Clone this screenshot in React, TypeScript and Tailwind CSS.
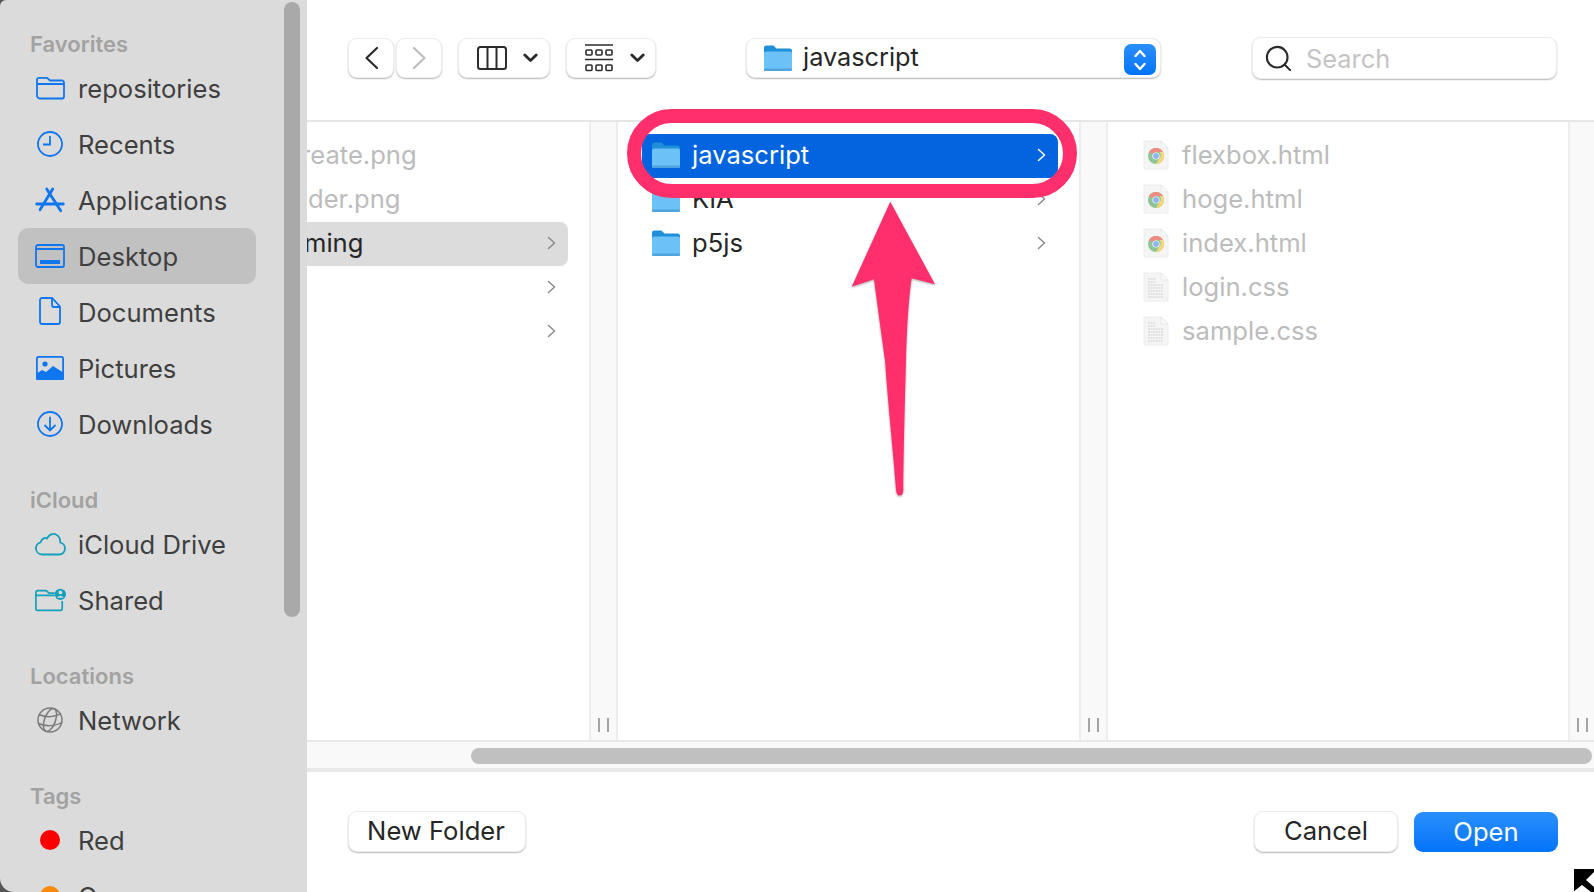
import type { ReactNode } from "react"
import { Search } from "lucide-react"

const font = "font-['Inter','Liberation_Sans',sans-serif]"
const blue = "#0f76f0"
const teal = "#12a0bd"

function FolderLine() {
  return (
    <svg width="32" height="32" viewBox="0 0 32 32" fill="none" stroke={blue} strokeWidth="1.8">
      <path d="M3 9.5v14a3 3 0 0 0 3 3h22a2 2 0 0 0 2-2V10.5a2 2 0 0 0-2-2H16l-3-2.6H5a2 2 0 0 0-2 2z" />
      <path d="M3 12h27" />
    </svg>
  )
}

function Clock() {
  return (
    <svg width="32" height="32" viewBox="0 0 32 32" fill="none" stroke={blue} strokeWidth="1.8">
      <circle cx="16" cy="16" r="12" />
      <path d="M16 8v8.5H9" />
    </svg>
  )
}

function AppStore() {
  return (
    <svg width="32" height="32" viewBox="0 0 32 32" fill="none" stroke={blue} strokeWidth="2.8" strokeLinecap="round">
      <path d="M12.700 5l14 21.700" />
      <path d="M18.700 5L6 25.700" />
      <path d="M2.700 20h26.600" />
    </svg>
  )
}

function DesktopIcon() {
  return (
    <svg width="32" height="32" viewBox="0 0 32 32" fill="none" stroke={blue} strokeWidth="1.8">
      <rect x="2" y="5" width="28" height="22" rx="2" />
      <path d="M2 9h28" />
      <rect x="6" y="20" width="20" height="4" rx="0.5" fill={blue} stroke="none" />
    </svg>
  )
}

function DocumentIcon() {
  return (
    <svg width="32" height="32" viewBox="0 0 32 32" fill="none" stroke={blue} strokeWidth="1.8">
      <path d="M8 3h10l8 8.5V27a2 2 0 0 1-2 2H8a2 2 0 0 1-2-2V5a2 2 0 0 1 2-2z" transform="translate(0 -1)" />
      <path d="M18 2v7a2 2 0 0 0 2 2h6" />
    </svg>
  )
}

function PicturesIcon() {
  return (
    <svg width="32" height="32" viewBox="0 0 32 32" fill="none">
      <rect x="2.9" y="4.9" width="26.2" height="21.2" rx="1.5" stroke={blue} strokeWidth="1.8" />
      <circle cx="11" cy="12" r="2.6" fill={blue} />
      <path d="M2 25v-3l6-4 4 2 7-6 11 7v6a1 1 0 0 1-1 1H3a1 1 0 0 1-1-1z" fill={blue} />
    </svg>
  )
}

function DownloadIcon() {
  return (
    <svg width="32" height="32" viewBox="0 0 32 32" fill="none" stroke={blue} strokeWidth="1.8" strokeLinecap="round">
      <circle cx="16" cy="16" r="12" />
      <path d="M16 9.5v13M11 17.5l5 5 5-5" />
    </svg>
  )
}

function CloudIcon() {
  return (
    <svg width="32" height="32" viewBox="0 0 32 32" fill="none" stroke={teal} strokeWidth="1.8">
      <path d="M8 26.5a6.2 6.2 0 0 1-1.4-12.2C8 10.5 11 9 13 10.4 15 6.500 19 5 22 6.500c3 1.400 4.400 4.500 4.200 8 3 .8 4.800 3.400 4.800 6 0 3.400-2.600 6-5.800 6z" />
    </svg>
  )
}

function SharedIcon() {
  return (
    <svg width="34" height="32" viewBox="0 0 34 32" fill="none">
      <path d="M2 8v17a2 2 0 0 0 2 2h24a2 2 0 0 0 2-2v-8M2 11h20M2 8a2 2 0 0 1 2-2h9l3 2.600h6" stroke={teal} strokeWidth="1.800" />
      <circle cx="28" cy="10" r="6" fill={teal} />
      <circle cx="28" cy="8" r="2" fill="#dbdbdb" />
      <path d="M24.500 13.500c1-2.500 6-2.500 7 0z" fill="#dbdbdb" />
    </svg>
  )
}

function GlobeIcon() {
  return (
    <svg width="32" height="32" viewBox="0 0 32 32" fill="none" stroke="#7b7b7b" strokeWidth="1.500">
      <circle cx="16" cy="16" r="12" />
      <ellipse cx="16" cy="16" rx="5.500" ry="12" transform="rotate(20 16 16)" />
      <path d="M5 10.500c6 3 16 3 22-1M4.500 19.500c6 3 17 3 23-1" />
    </svg>
  )
}

function Dot({ color }: { color: string }) {
  return <span className="block size-5 rounded-full" style={{ backgroundColor: color }} />
}

function SideRow({ icon, label, active }: { icon: ReactNode; label: string; active?: boolean }) {
  return (
    <div className={`flex h-14 w-[238px] items-center gap-3 rounded-[10px] pl-4 text-[25.600px] text-[#3f3f3f] ${active ? "bg-[#c1c1c1]" : ""}`}>
      <span className="flex w-8 shrink-0 items-center justify-center">{icon}</span>
      <span className="pt-0.5">{label}</span>
    </div>
  )
}

function SideHeading({ children }: { children: ReactNode }) {
  return (
    <div className="flex h-[34px] items-center pl-3 pt-0.5 text-[22px] font-semibold text-[#a2a2a2]">
      {children}
    </div>
  )
}

function Folder({ className = "" }: { className?: string }) {
  return (
    <svg className={className} width="30" height="28" viewBox="0 0 30 28">
      <path d="M1 4a2.500 2.500 0 0 1 2.500-2.500h7l3 3h13A2.500 2.500 0 0 1 29 7v4H1z" fill="#1f8fd8" />
      <rect x="1" y="7.500" width="28" height="19.500" rx="2" fill="#6cc1f7" />
      <rect x="1" y="24.500" width="28" height="2.500" rx="1.200" fill="#4fa3de" />
    </svg>
  )
}

function FileBase({ children }: { children?: ReactNode }) {
  return (
    <svg width="26" height="30" viewBox="0 0 26 30">
      <path d="M1 1h17l7 7v21H1z" fill="#f5f5f5" stroke="#ececec" />
      <path d="M18 1v7h7z" fill="#fafafa" stroke="#e8e8e8" />
      {children}
    </svg>
  )
}

function ChromeFile() {
  return (
    <FileBase>
      <circle cx="13" cy="16" r="8" fill="#8fc596" />
      <path d="M13 8a8 8 0 0 1 7 4H13a4 4 0 0 0-3.600 2.300L6.100 12A8 8 0 0 1 13 8z" fill="#ee8b83" />
      <path d="M20 12a8 8 0 0 1-7 12l3.500-6a4 4 0 0 0 0-6z" fill="#f7d67a" />
      <circle cx="13" cy="16" r="3.600" fill="#fff" />
      <circle cx="13" cy="16" r="2.900" fill="#8fb4f2" />
    </FileBase>
  )
}

function TextFile() {
  return (
    <FileBase>
      <path d="M5 7h8M5 10h8M5 13h15M5 16h15M5 19h15M5 22h15M5 25h15" stroke="#dcdcdc" strokeWidth="1.500" strokeDasharray="2 0.600" />
    </FileBase>
  )
}

function Gutter({ className = "w-[29px]" }: { className?: string }) {
  return (
    <div className={`flex shrink-0 items-end justify-center gap-[7px] border-x-2 border-[#ededed] bg-[#f9f9f9] pb-2 ${className}`}>
      <span className="h-[14px] w-0.5 bg-[#a4a4a4]" />
      <span className="h-[14px] w-0.5 bg-[#a4a4a4]" />
    </div>
  )
}

function Chevron({ color = "#8a8a8a" }: { color?: string }) {
  return (
    <svg width="9" height="14" viewBox="0 0 9 14" fill="none" stroke={color} strokeWidth="1.500" strokeLinecap="round" strokeLinejoin="round">
      <path d="M1.500 1.500L7.500 7l-6 5.500" />
    </svg>
  )
}

function DownCaret() {
  return (
    <svg width="15" height="10" viewBox="0 0 15 10" fill="none" stroke="#2a2a2a" strokeWidth="2.800" strokeLinecap="round" strokeLinejoin="round">
      <path d="M1.800 2L7.500 7.500 13.200 2" />
    </svg>
  )
}

function NavArrow({ d, color }: { d: string; color: string }) {
  return (
    <svg width="15" height="24" viewBox="0 0 15 24" fill="none" stroke={color} strokeWidth="2.200" strokeLinecap="round" strokeLinejoin="round">
      <path d={d} />
    </svg>
  )
}

function ToolButton({ className, children }: { className: string; children: ReactNode }) {
  return (
    <div className={`flex h-10 shrink-0 items-center rounded-[9px] border border-[#ececec] bg-white shadow-[0_1px_1.500px_rgba(0,0,0,0.28)] ${className}`}>
      {children}
    </div>
  )
}

function ColumnsGlyph() {
  return (
    <svg width="30" height="24" viewBox="0 0 30 24" fill="none" stroke="#2c2c2c" strokeWidth="2">
      <rect x="1" y="1" width="28" height="22" rx="2.500" />
      <path d="M10.500 1v22M19.500 1v22" />
    </svg>
  )
}

function GroupGlyph() {
  return (
    <svg width="28" height="28" viewBox="0 0 28 28" fill="none" stroke="#2c2c2c" strokeWidth="1.600">
      <path d="M0 1h28M0 15.500h28" />
      <rect x="1" y="6" width="6" height="5" rx="1" />
      <rect x="11" y="6" width="6" height="5" rx="1" />
      <rect x="21" y="6" width="6" height="5" rx="1" />
      <rect x="1" y="21" width="6" height="5.500" rx="1" />
      <rect x="11" y="21" width="6" height="5.500" rx="1" />
      <rect x="21" y="21" width="6" height="5.500" rx="1" />
    </svg>
  )
}

const sidebarFavorites = [
  { label: "repositories", icon: <FolderLine /> },
  { label: "Recents", icon: <Clock /> },
  { label: "Applications", icon: <AppStore /> },
  { label: "Desktop", icon: <DesktopIcon />, active: true },
  { label: "Documents", icon: <DocumentIcon /> },
  { label: "Pictures", icon: <PicturesIcon /> },
  { label: "Downloads", icon: <DownloadIcon /> },
]

const files = [
  { name: "flexbox.html", icon: <ChromeFile /> },
  { name: "hoge.html", icon: <ChromeFile /> },
  { name: "index.html", icon: <ChromeFile /> },
  { name: "login.css", icon: <TextFile /> },
  { name: "sample.css", icon: <TextFile /> },
]

const buttonClass =
  "flex h-[41px] items-center justify-center rounded-[9px] border border-[#ececec] bg-white text-[#262626] shadow-[0_1px_1.500px_rgba(0,0,0,0.28)]"

export default function App() {
  return (
    <div className={`relative flex h-[892px] w-[1594px] overflow-hidden bg-white ${font}`}>
      {/* window corners */}
      <div className="absolute left-0 top-0 h-5 w-5 bg-[#555555]" />
      <div className="absolute bottom-0 left-0 h-5 w-5 bg-[#555555]" />

      {/* Sidebar */}
      <aside className="relative h-full w-[307px] shrink-0 overflow-hidden rounded-tl-[6px] rounded-bl-[14px] bg-[#dbdbdb] pl-[18px] pt-[26px]">
        <SideHeading>Favorites</SideHeading>
        {sidebarFavorites.map((item) => (
          <SideRow key={item.label} {...item} />
        ))}
        <div className="mt-[30px]">
          <SideHeading>iCloud</SideHeading>
          <SideRow label="iCloud Drive" icon={<CloudIcon />} />
          <SideRow label="Shared" icon={<SharedIcon />} />
        </div>
        <div className="mt-[30px]">
          <SideHeading>Locations</SideHeading>
          <SideRow label="Network" icon={<GlobeIcon />} />
        </div>
        <div className="mt-[30px]">
          <SideHeading>Tags</SideHeading>
          <SideRow label="Red" icon={<Dot color="#ff0000" />} />
          <SideRow label="Orange" icon={<Dot color="#f98a0c" />} />
        </div>
        <div className="absolute left-[284px] top-0.5 h-[615px] w-4 rounded-full bg-[#a9a9a9]" />
      </aside>

      {/* Main */}
      <main className="flex h-full min-w-0 flex-1 flex-col">
        <header className="flex h-[122px] shrink-0 border-b-2 border-[#e6e6e6] pl-[41px] pt-[38px]">
          <ToolButton className="w-[46px] justify-center">
            <NavArrow d="M13 2L2.500 12 13 22" color="#2a2a2a" />
          </ToolButton>
          <ToolButton className="ml-0.5 w-[46px] justify-center">
            <NavArrow d="M2 2l10.500 10L2 22" color="#bdbdbd" />
          </ToolButton>
          <ToolButton className="ml-4 w-[92px] gap-4 pl-[18px]">
            <ColumnsGlyph />
            <DownCaret />
          </ToolButton>
          <ToolButton className="ml-4 w-[90px] gap-[17px] pl-[18px]">
            <GroupGlyph />
            <DownCaret />
          </ToolButton>
          <ToolButton className="relative ml-[90px] w-[415px] pl-4">
            <Folder />
            <span className="mb-0.5 ml-2.5 text-[25.300px] text-[#262626]">javascript</span>
            <div className="absolute right-1 top-[5px] flex h-[31px] w-8 flex-col items-center justify-center gap-0.5 rounded-[7px] bg-gradient-to-b from-[#2a8ffb] to-[#0073fb]">
              <svg width="14" height="24" viewBox="0 0 14 24" fill="none" stroke="white" strokeWidth="2.400" strokeLinecap="round" strokeLinejoin="round">
                <path d="M2.500 8L7 3l4.500 5M2.500 16L7 21l4.500-5" />
              </svg>
            </div>
          </ToolButton>
          <ToolButton className="-mt-px ml-[91px] h-[42px] w-[305px] gap-3 pl-2.5">
            <Search size={31} strokeWidth={1.600} className="text-[#2a2a2a]" />
            <span className="pt-0.5 text-[25.400px] text-[#c4c4c4]">Search</span>
          </ToolButton>
        </header>

        {/* Columns */}
        <section className="flex min-h-0 flex-1">
          <div className="relative w-[282px] shrink-0 overflow-hidden pt-3 text-[25.600px]">
            <div className="flex h-11 items-center pb-0.5 text-[#bcbcbc]">
              <span className="-ml-1.5">reate.png</span>
            </div>
            <div className="flex h-11 items-center pb-0.5 text-[#bcbcbc]">
              <span className="ml-px">der.png</span>
            </div>
            <div className="flex h-11 w-[261px] items-center justify-between rounded-r-[8px] bg-[#dcdcdc] pb-0.5 pr-3 text-[#262626]">
              <span className="-ml-[3px]">ming</span>
              <Chevron />
            </div>
            <div className="flex h-11 w-[261px] items-center justify-end pb-0.5 pr-3">
              <Chevron />
            </div>
            <div className="flex h-11 w-[261px] items-center justify-end pb-0.5 pr-3">
              <Chevron />
            </div>
          </div>
          <Gutter />
          <div className="w-[461px] shrink-0 overflow-hidden pl-6 pr-[21px] pt-3 text-[25.600px]">
            <div className="flex h-11 items-center rounded-[8px] bg-[#0364e0] pb-0.5 pl-[9px] pr-3 text-white">
              <Folder />
              <span className="ml-[11px] flex-1">javascript</span>
              <Chevron color="#ffffff" />
            </div>
            <div className="flex h-11 items-center pb-0.5 pl-[9px] pr-3 text-[#262626]">
              <Folder />
              <span className="ml-[11px] flex-1">KIA</span>
              <Chevron />
            </div>
            <div className="flex h-11 items-center pb-0.5 pl-[9px] pr-3 text-[#262626]">
              <Folder />
              <span className="ml-[11px] flex-1">p5js</span>
              <Chevron />
            </div>
          </div>
          <Gutter />
          <div className="w-[460px] shrink-0 pl-[35px] pt-3 text-[25.600px] text-[#bcbcbc]">
            {files.map((file) => (
              <div key={file.name} className="flex h-11 items-center gap-[13px] pb-0.5">
                {file.icon}
                <span>{file.name}</span>
              </div>
            ))}
          </div>
          <Gutter className="flex-1 border-r-0" />
        </section>

        {/* Horizontal scroller */}
        <div className="flex h-[32px] shrink-0 items-center border-b-4 border-t-2 border-[#e8e8e8] bg-[#f9f9f9] pl-[164px] pr-0.5 pt-0.5">
          <div className="h-4 flex-1 rounded-full bg-[#c0c0c0]" />
        </div>

        {/* Footer */}
        <footer className="flex h-[120px] shrink-0 items-start justify-between pl-[41px] pr-9 pt-[39px] text-[25.600px]">
          <button className={`${buttonClass} w-[178px] pr-0.5`}>New Folder</button>
          <div className="flex gap-4">
            <button className={`${buttonClass} w-[144px]`}>Cancel</button>
            <button className="mt-px flex h-10 w-[144px] items-center justify-center rounded-[9px] bg-gradient-to-b from-[#2a8ffb] to-[#0073fb] text-white">
              Open
            </button>
          </div>
        </footer>
      </main>

      {/* Pink annotation */}
      <div className="pointer-events-none absolute left-[627px] top-[109px] h-[89px] w-[450px] rounded-[45px] border-[14px] border-[#ff2f6b]" />
      <svg className="pointer-events-none absolute left-[840px] top-[195px] drop-shadow-[0_1px_1px_rgba(0,0,0,0.35)]" width="100" height="305" viewBox="0 0 100 305">
        <path
          d="M50.300 6.700L11.700 91.700L34 84.300C38 115 43 150 45 165C48 210 54 265 56 295Q56.500 300.500 59.700 300.500Q63 300.500 63.300 295C63.500 260 65 200 66 165C67 130 69 100 71.700 83.300L95 89.300Z"
          fill="#ff2f6b"
        />
      </svg>

      {/* Cursor */}
      <svg className="absolute bottom-0 right-0" width="25" height="25" viewBox="0 0 25 25">
        <rect width="25" height="25" fill="#ffffff" />
        <rect x="5" y="2" width="20" height="23" fill="#000000" />
        <path d="M25 5l-8 8 8 7z" fill="#ffffff" />
        <path d="M13 18l-9 7h18z" fill="#ffffff" />
      </svg>
    </div>
  )
}
